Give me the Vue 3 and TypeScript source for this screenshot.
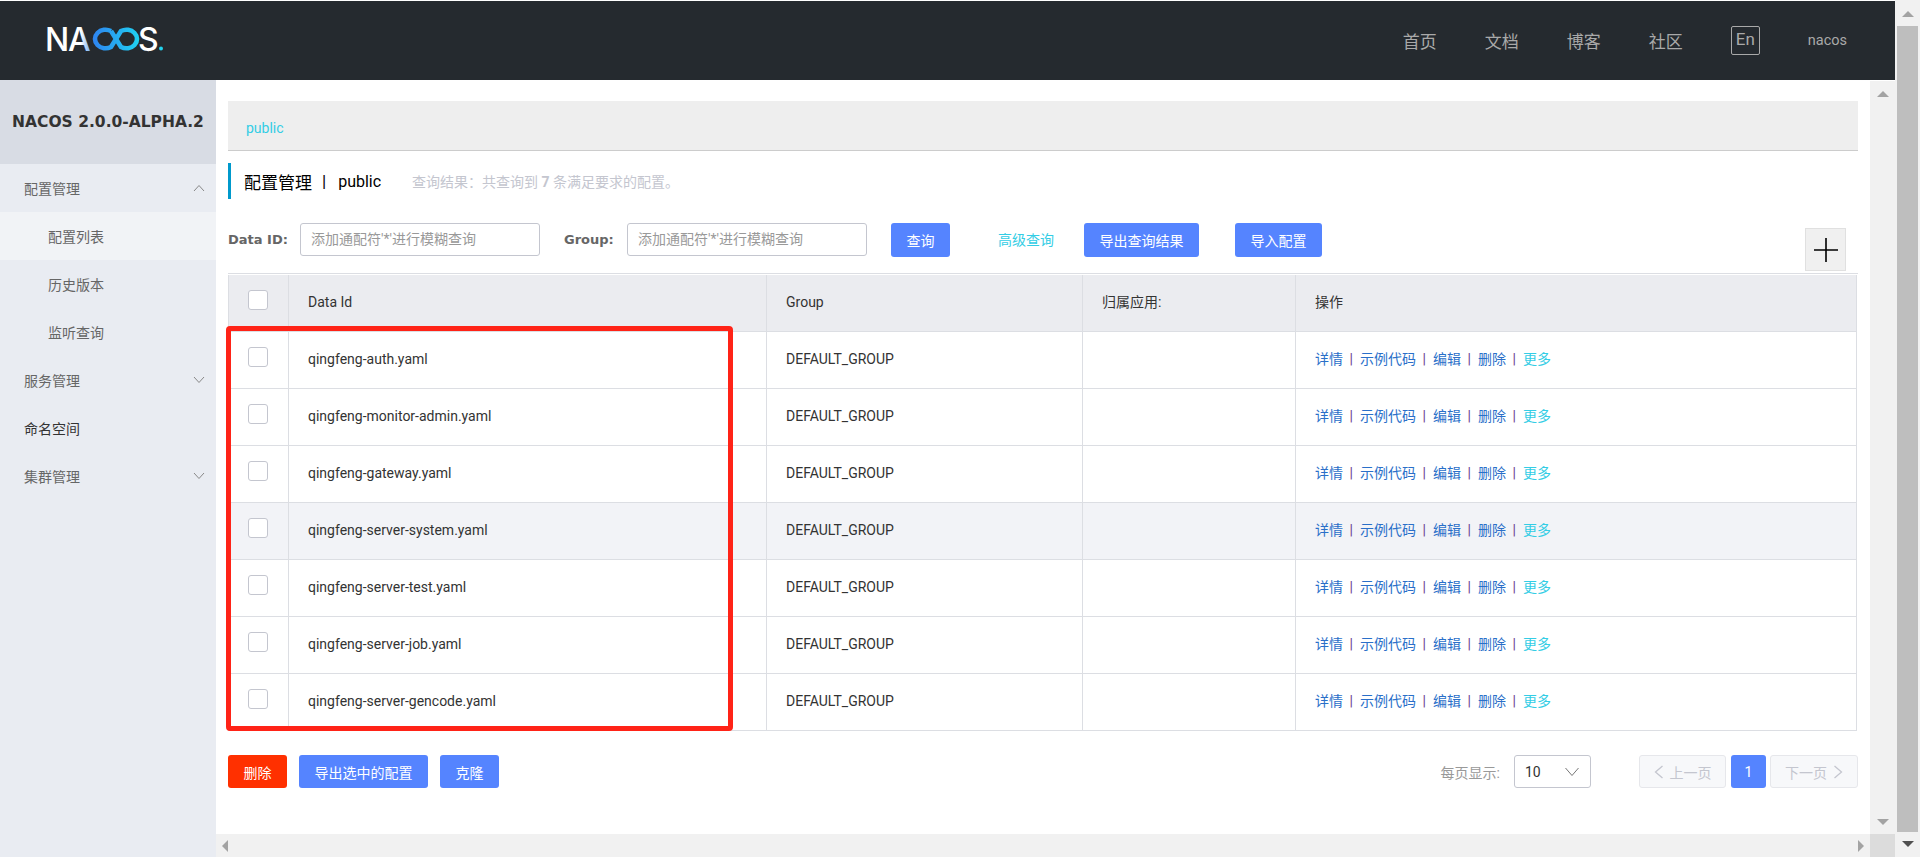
<script setup lang="ts">
const configs = [
  'qingfeng-auth.yaml',
  'qingfeng-monitor-admin.yaml',
  'qingfeng-gateway.yaml',
  'qingfeng-server-system.yaml',
  'qingfeng-server-test.yaml',
  'qingfeng-server-job.yaml',
  'qingfeng-server-gencode.yaml',
]
const navLinks = ['首页', '文档', '博客', '社区']
const actions = ['详情', '示例代码', '编辑', '删除']
const hoverRow = 3
</script>

<template>
  <div class="page">
    <div class="window">
      <header class="topbar">
        <svg class="logo" width="126" height="46" viewBox="0 0 126 46">
          <defs>
            <linearGradient id="loop" gradientUnits="userSpaceOnUse" x1="50" y1="0" x2="100" y2="0">
              <stop offset="0" stop-color="#2f7ff0" />
              <stop offset="1" stop-color="#1fd3f2" />
            </linearGradient>
            <linearGradient id="legA" gradientUnits="userSpaceOnUse" x1="30" y1="0" x2="54" y2="0">
              <stop offset="0.45" stop-color="#ffffff" />
              <stop offset="1" stop-color="#3f8df0" />
            </linearGradient>
          </defs>
          <g transform="translate(0 8)">
            <text x="5" y="24.5" class="logo-text" fill="#fff">N</text>
            <text x="28" y="24.5" class="logo-text" fill="url(#legA)">A</text>
            <path
              d="M71 5 A10.6 9.3 0 1 0 71 21 L81 5 A10.6 9.3 0 1 1 81 21 L71 5"
              fill="none"
              stroke="url(#loop)"
              stroke-width="4.6"
            />
            <text x="98" y="24.5" class="logo-text" fill="#fff">S</text>
            <circle cx="121" cy="22.5" r="2" fill="#22d3ee" />
          </g>
        </svg>
        <nav class="top-nav">
          <a v-for="link in navLinks" :key="link" class="top-link">{{ link }}</a>
          <span class="lang">En</span>
          <span class="user">nacos</span>
        </nav>
      </header>

      <div class="body-row">
        <aside class="sidebar">
          <div class="version">NACOS 2.0.0-ALPHA.2</div>
          <div class="menu-item">
            配置管理
            <svg class="chev" width="12" height="8" viewBox="0 0 12 8"><path d="M1 7 L6 1.5 L11 7" /></svg>
          </div>
          <div class="menu-sub active">配置列表</div>
          <div class="menu-sub">历史版本</div>
          <div class="menu-sub">监听查询</div>
          <div class="menu-item">
            服务管理
            <svg class="chev" width="12" height="8" viewBox="0 0 12 8"><path d="M1 1 L6 6.5 L11 1" /></svg>
          </div>
          <div class="menu-item dark">命名空间</div>
          <div class="menu-item">
            集群管理
            <svg class="chev" width="12" height="8" viewBox="0 0 12 8"><path d="M1 1 L6 6.5 L11 1" /></svg>
          </div>
        </aside>

        <div class="main">
          <div class="main-row">
            <main class="content">
              <div class="crumb"><a class="crumb-link">public</a></div>

              <div class="title-row">
                <span class="title">配置管理</span>
                <span class="title-sep">|</span>
                <span class="title-ns">public</span>
                <span class="summary">查询结果：共查询到 <b>7</b> 条满足要求的配置。</span>
              </div>

              <div class="search-row">
                <label class="field-label">Data ID:</label>
                <div class="input first">添加通配符'*'进行模糊查询</div>
                <label class="field-label group">Group:</label>
                <div class="input">添加通配符'*'进行模糊查询</div>
                <button class="btn query">查询</button>
                <a class="advanced">高级查询</a>
                <button class="btn export">导出查询结果</button>
                <button class="btn import">导入配置</button>
                <button class="plus" aria-label="add">
                  <svg width="24" height="24" viewBox="0 0 24 24">
                    <path d="M0 12 H24 M12 0 V24" stroke="#000" stroke-width="1.6" fill="none" />
                  </svg>
                </button>
              </div>

              <div class="table-wrap">
                <div class="table">
                  <div class="row head">
                    <div class="cell check"><span class="checkbox"></span></div>
                    <div class="cell">Data Id</div>
                    <div class="cell">Group</div>
                    <div class="cell">归属应用:</div>
                    <div class="cell">操作</div>
                  </div>
                  <div
                    v-for="(name, i) in configs"
                    :key="name"
                    class="row"
                    :class="{ hover: i === hoverRow }"
                  >
                    <div class="cell check"><span class="checkbox"></span></div>
                    <div class="cell">{{ name }}</div>
                    <div class="cell">DEFAULT_GROUP</div>
                    <div class="cell"></div>
                    <div class="cell ops">
                      <template v-for="action in actions" :key="action">
                        <a class="op">{{ action }}</a><span class="op-sep">|</span>
                      </template>
                      <a class="op more">更多</a>
                    </div>
                  </div>
                </div>
                <div class="annotation"></div>
              </div>

              <div class="footer-row">
                <button class="btn danger">删除</button>
                <button class="btn">导出选中的配置</button>
                <button class="btn">克隆</button>
                <span class="page-size-label">每页显示:</span>
                <div class="select">
                  <span>10</span>
                  <svg width="16" height="10" viewBox="0 0 16 10"><path d="M1.5 1 L8 8.5 L14.5 1" /></svg>
                </div>
                <div class="pager disabled prev">
                  <svg width="10" height="14" viewBox="0 0 10 14"><path d="M8.5 1 L1.5 7 L8.5 13" /></svg>
                  上一页
                </div>
                <div class="pager current">1</div>
                <div class="pager disabled next">
                  下一页
                  <svg width="10" height="14" viewBox="0 0 10 14"><path d="M1.5 1 L8.5 7 L1.5 13" /></svg>
                </div>
              </div>
            </main>

            <div class="vbar">
              <span class="tri up"></span>
              <span class="tri down"></span>
            </div>
          </div>
          <div class="hbar-row">
            <div class="hbar">
              <span class="tri left"></span>
              <span class="tri right"></span>
            </div>
            <div class="corner"></div>
          </div>
        </div>
      </div>
    </div>

    <div class="outer-bar">
      <span class="tri up"></span>
      <div class="thumb"></div>
      <span class="tri down dark"></span>
    </div>
  </div>
</template>

<style>
html,
body {
  margin: 0;
  height: 100%;
  overflow: hidden;
  background: #fff;
}
</style>

<style scoped>
.page {
  display: flex;
  width: 1920px;
  height: 857px;
  overflow: hidden;
  font-family: Roboto, "Noto Sans CJK SC", sans-serif;
  font-size: 14px;
  color: #333;
}

.window {
  width: 1895px;
  display: flex;
  flex-direction: column;
  padding-top: 1px;
  box-sizing: border-box;
}

/* header */
.topbar {
  height: 79px;
  flex: none;
  background: #252a2f;
  display: flex;
  align-items: center;
  justify-content: space-between;
}

.logo {
  margin-left: 40px;
}

.logo-text {
  font-family: Inter, sans-serif;
  font-size: 32px;
  font-weight: 500;
}

.top-nav {
  display: flex;
  align-items: center;
  color: #a9a9a9;
}

.top-link {
  width: 34px;
  margin-right: 48px;
  font-size: 17px;
  white-space: nowrap;
}

.lang {
  width: 27px;
  height: 27px;
  border: 1px solid #a9a9a9;
  border-radius: 2px;
  text-align: center;
  line-height: 24px;
  font-size: 17px;
}

.user {
  margin-left: 48px;
  margin-right: 48px;
  font-size: 14.5px;
}

/* sidebar */
.body-row {
  flex: 1;
  display: flex;
  min-height: 0;
}

.sidebar {
  width: 216px;
  flex: none;
  background: #e9ecf2;
  color: #666;
}

.version {
  height: 84px;
  background: #d8dce4;
  display: flex;
  align-items: center;
  justify-content: center;
  font-family: "DejaVu Sans", sans-serif;
  font-weight: bold;
  font-size: 15.5px;
  color: #333;
  white-space: nowrap;
}

.menu-item,
.menu-sub {
  height: 48px;
  display: flex;
  align-items: center;
  justify-content: space-between;
  padding-left: 24px;
  padding-right: 11px;
}

.menu-sub {
  padding-left: 48px;
}

.menu-sub.active {
  background: #f1f3f6;
}

.menu-item.dark {
  color: #333;
}

.chev {
  fill: none;
  stroke: #888;
  stroke-width: 1;
}

/* main */
.main {
  flex: 1;
  min-width: 0;
  display: flex;
  flex-direction: column;
}

.main-row {
  flex: 1;
  display: flex;
  min-height: 0;
}

.content {
  flex: 1;
  min-width: 0;
  padding: 21px 12px 0;
}

.crumb {
  height: 50px;
  box-sizing: border-box;
  background: #eee;
  border-bottom: 1px solid #ccc;
  padding: 17px 18px 0;
  line-height: 20px;
}

.crumb-link {
  color: #33cde5;
}

.title-row {
  margin-top: 12px;
  height: 36px;
  border-left: 3px solid #09c;
  padding-left: 13px;
  display: flex;
  align-items: center;
  color: #000;
  font-size: 17px;
}

.title-sep {
  margin: 0 12px 0 10px;
}

.title-ns {
  font-size: 16px;
}

.summary {
  margin-left: 31px;
  font-size: 14px;
  color: #c4c6cf;
}

.search-row {
  margin-top: 24px;
  height: 50px;
  display: flex;
  align-items: flex-start;
}

.field-label {
  height: 33px;
  line-height: 33px;
  width: 72px;
  flex: none;
  font-family: "DejaVu Sans", sans-serif;
  font-weight: bold;
  font-size: 13px;
  color: #666;
}

.field-label.group {
  width: 63px;
  margin-left: 24px;
}

.input {
  width: 240px;
  height: 33px;
  box-sizing: border-box;
  border: 1px solid #c4c6cf;
  border-radius: 3px;
  padding-left: 10px;
  line-height: 31px;
  font-size: 14px;
  color: #999;
  white-space: nowrap;
  overflow: hidden;
}

.btn {
  height: 33px;
  padding: 0 15.5px;
  border: none;
  border-radius: 3px;
  background: #5584ff;
  color: #fff;
  font: inherit;
  font-size: 14px;
  white-space: nowrap;
}

.search-row .btn {
  height: 34px;
}

.query {
  margin-left: 24px;
}

.advanced {
  margin-left: 48px;
  line-height: 34px;
  color: #33cde5;
}

.export {
  margin-left: 30px;
}

.import {
  margin-left: 36px;
}

.plus {
  margin: 5px 12px 0 auto;
  width: 41px;
  height: 43px;
  padding: 0;
  background: #f0f0f0;
  border: 1px solid #e0e0e0;
  display: flex;
  align-items: center;
  justify-content: center;
}

/* table */
.table-wrap {
  position: relative;
}

.table {
  border-top: 1px solid #dcdee3;
  padding-top: 1px;
}

.row {
  display: grid;
  grid-template-columns: 59px 478px 316px 213px 1fr;
  height: 57px;
  box-sizing: border-box;
  margin-right: 1px;
  border-left: 1px solid #dcdee3;
  border-right: 1px solid #dcdee3;
  border-bottom: 1px solid #dcdee3;
}

.row.head {
  background: #ebecf0;
}

.row.hover {
  background: #f2f3f7;
}

.cell {
  padding-left: 19px;
  border-left: 1px solid #dcdee3;
  line-height: 54px;
  font-size: 14px;
  color: #333;
  white-space: nowrap;
}

.cell.check {
  border-left: none;
}

.checkbox {
  display: block;
  margin-top: 15px;
  width: 20px;
  height: 20px;
  box-sizing: border-box;
  background: #fff;
  border: 1px solid #c4c6cf;
  border-radius: 3px;
}

.ops {
  display: flex;
  align-items: flex-start;
}

.op {
  color: #2a6fc9;
}

.op.more {
  color: #33cde5;
}

.op-sep {
  width: 4px;
  margin: 0 6.5px;
  color: #6a3a90;
}

.annotation {
  position: absolute;
  left: -2px;
  top: 53px;
  width: 507px;
  height: 405px;
  box-sizing: border-box;
  border: 5px solid #ff2317;
  border-radius: 4px;
  pointer-events: none;
}

/* footer */
.footer-row {
  margin-top: 24px;
  display: flex;
  align-items: center;
  height: 33px;
}

.footer-row .btn + .btn {
  margin-left: 12px;
}

.btn.danger {
  background: #ff3000;
}

.page-size-label {
  margin-left: auto;
  color: #999;
  font-size: 14px;
}

.select {
  margin-left: 14px;
  width: 77px;
  height: 33px;
  box-sizing: border-box;
  border: 1px solid #c4c6cf;
  border-radius: 3px;
  display: flex;
  align-items: center;
  justify-content: space-between;
  padding: 0 10px;
  font-size: 14px;
}

.select svg {
  fill: none;
  stroke: #777;
  stroke-width: 1;
}

.pager {
  height: 33px;
  box-sizing: border-box;
  border-radius: 3px;
  display: flex;
  align-items: center;
  justify-content: center;
  gap: 6px;
}

.pager svg {
  fill: none;
  stroke: #c4c6cf;
  stroke-width: 1.3;
}

.pager.disabled {
  background: #f7f8fa;
  border: 1px solid #e6e7eb;
  color: #c4c6cf;
}

.prev {
  width: 87px;
  margin-left: 48px;
}

.current {
  width: 35px;
  margin-left: 5px;
  background: #5584ff;
  color: #fff;
}

.next {
  width: 88px;
  margin-left: 4px;
}

/* scrollbars */
.tri {
  display: block;
  width: 0;
  height: 0;
  border-style: solid;
  border-color: transparent;
}

.tri.up {
  border-width: 0 6px 6px;
  border-bottom-color: #a3a3a3;
}

.tri.down {
  border-width: 6px 6px 0;
  border-top-color: #a3a3a3;
}

.tri.down.dark {
  border-top-color: #505050;
}

.tri.left {
  border-width: 6px 6px 6px 0;
  border-right-color: #a3a3a3;
}

.tri.right {
  border-width: 6px 0 6px 6px;
  border-left-color: #a3a3a3;
}

.vbar {
  width: 25px;
  flex: none;
  margin-top: 1px;
  background: #f1f1f1;
  display: flex;
  flex-direction: column;
  align-items: center;
  justify-content: space-between;
  padding: 10px 0 9px;
  box-sizing: border-box;
}

.hbar-row {
  height: 23px;
  flex: none;
  display: flex;
}

.hbar {
  flex: 1;
  background: #f1f1f1;
  display: flex;
  align-items: center;
  justify-content: space-between;
  padding: 0 6px;
}

.corner {
  width: 25px;
  background: #dcdcdc;
}

.outer-bar {
  width: 25px;
  flex: none;
  background: #f1f1f1;
  display: flex;
  flex-direction: column;
  align-items: center;
  padding-top: 11px;
  box-sizing: border-box;
}

.thumb {
  width: 21px;
  height: 806px;
  margin-top: 9px;
  background: #bebebe;
}

.outer-bar .tri.down {
  margin-top: 9px;
}
</style>
